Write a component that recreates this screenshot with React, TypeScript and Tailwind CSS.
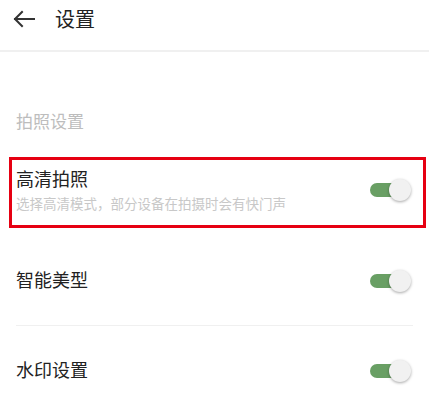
import React from 'react';

const Toggle: React.FC = () => (
  <div className="relative w-[41px] h-[22px] shrink-0">
    <div className="absolute left-0 top-[4px] w-[34px] h-[14px] rounded-full bg-[#699f64]" />
    <div className="absolute right-0 top-0 w-[22px] h-[22px] rounded-full bg-[#f1f1f1] shadow-[0_1px_3px_rgba(0,0,0,0.35)]" />
  </div>
);

const App: React.FC = () => {
  return (
    <div className="w-[429px] h-[405px] bg-white overflow-hidden font-['Noto_Sans_CJK_SC','Noto_Sans',sans-serif]">
      {/* Header */}
      <header className="h-[52px] border-b-2 border-[#f0f0f0]">
        <div className="h-[38px] flex items-center">
          <svg className="ml-[13px]" width="22" height="18" viewBox="0 0 22 18" fill="none">
            <path d="M2 9H21M9 2L2 9L9 16" stroke="#333" strokeWidth="2" strokeLinecap="square" />
          </svg>
          <h1 className="ml-[20px] text-[20px] leading-[26px] text-[#222]">设置</h1>
        </div>
      </header>

      {/* Section label */}
      <div className="pt-[57px] px-4 text-[17px] leading-[24px] text-[#bdbdbd]">拍照设置</div>

      {/* Highlighted item */}
      <div className="mt-[24px] ml-[9px] w-[417px] h-[71px] border-[3px] border-[#e60012] flex items-start pl-[4px] pr-[12px]">
        <div className="flex-1 min-w-0 pt-[5.5px]">
          <div className="text-[18px] leading-[24px] text-[#222]">高清拍照</div>
          <div className="mt-[4px] text-[13.5px] leading-[18px] text-[#c8c8c8] whitespace-nowrap">
            选择高清模式，部分设备在拍摄时会有快门声
          </div>
        </div>
        <div className="mt-[19px]">
          <Toggle />
        </div>
      </div>

      {/* Other items */}
      <div className="mt-[8px] mx-4">
        <div className="h-[90px] flex items-center justify-between border-b border-[#f0f0f0] pr-[2px]">
          <span className="mb-[4px] text-[18px] leading-[24px] text-[#222]">智能美型</span>
          <Toggle />
        </div>
        <div className="h-[90px] flex items-center justify-between pr-[2px]">
          <span className="mb-[4px] text-[18px] leading-[24px] text-[#222]">水印设置</span>
          <Toggle />
        </div>
      </div>
    </div>
  );
};

export default App;
